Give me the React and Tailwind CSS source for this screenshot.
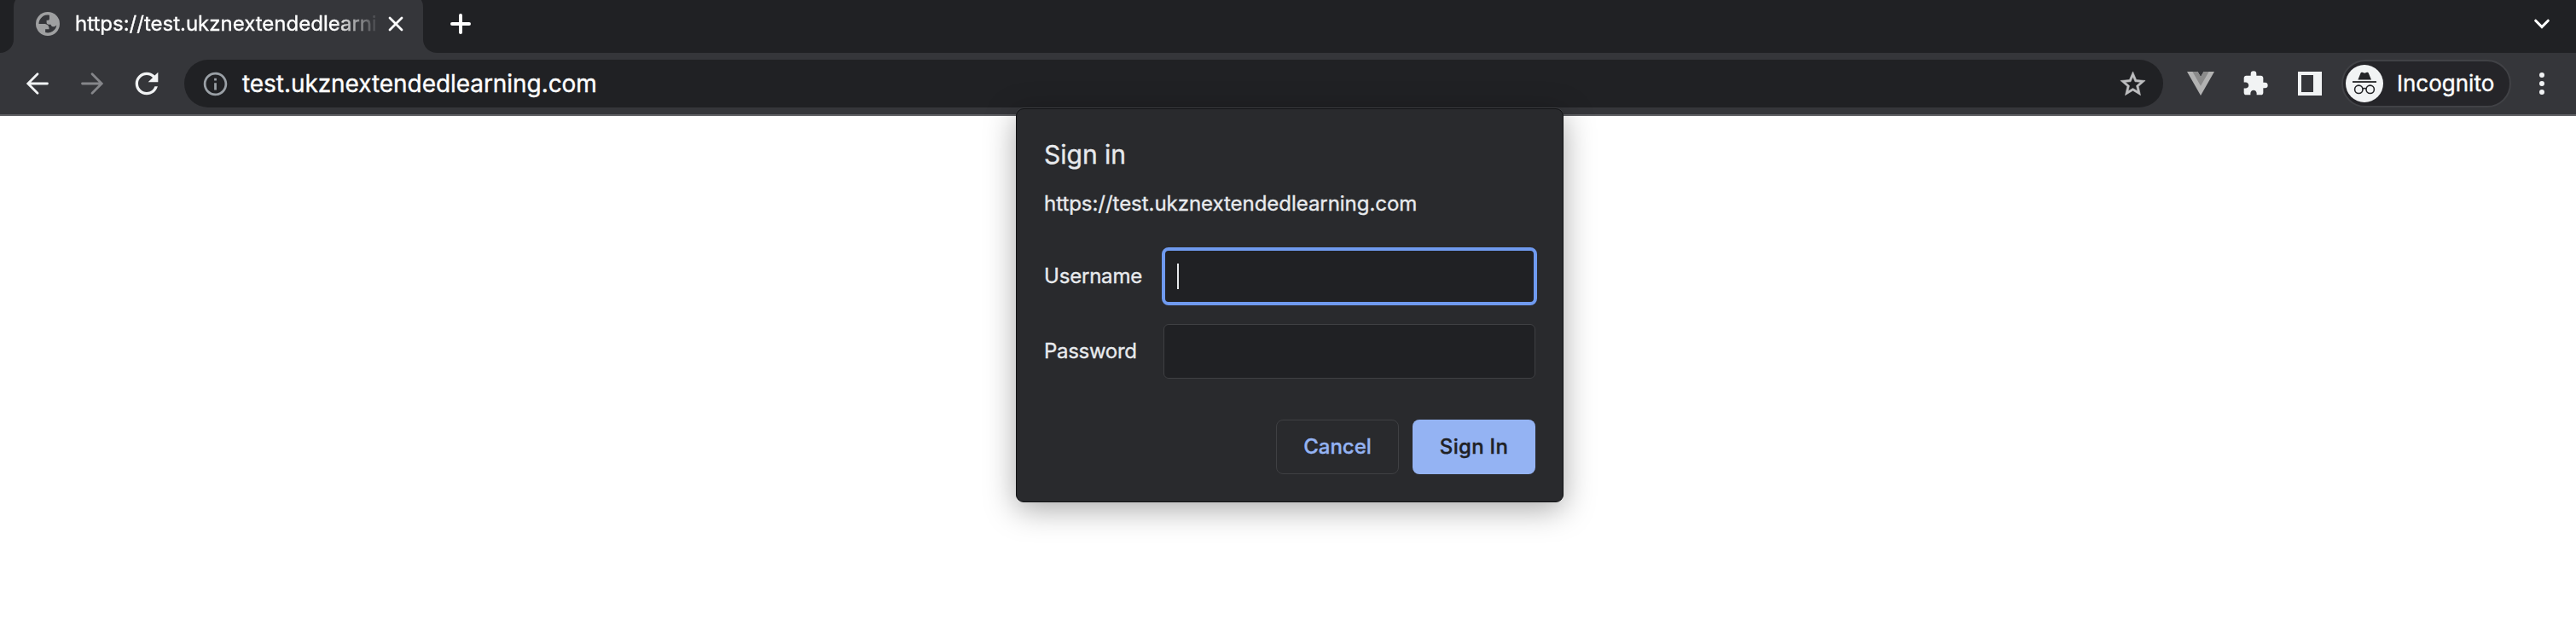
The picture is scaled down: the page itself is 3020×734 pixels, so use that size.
import React from 'react';
import { MdExtension, MdInfoOutline, MdRefresh } from 'react-icons/md';

const SITE = 'test.ukznextendedlearning.com';

const GlobeIcon = () => (
  <svg viewBox="0 0 16 16" className="h-7 w-7 shrink-0">
    <circle cx="8" cy="8" r="8" fill="#9fa0a1" />
    <path
      fill="#35363a"
      d="M2 8H5.4C7.8 8 9 9.2 8.9 11.6H6.36V13.77A6 6 0 0 0 13.9 8.9C13.2 9.6 12.6 9.9 12 9.9C11 9.9 10.3 9.4 10 8.4H8.6C7.8 8.4 7.2 7.8 7.2 7V5.6H8.2C8.8 5.6 9.1 5.2 9.1 4.6V2.1A6 6 0 0 0 2 8Z"
    />
  </svg>
);

const ArrowIcon = ({ className }) => (
  <svg viewBox="0 0 28 28" fill="none" stroke="currentColor" strokeWidth="2.8" strokeLinecap="round" className={className}>
    <path d="M25.5 14H3.5M14 2.8L2.8 14L14 25.2" />
  </svg>
);

const StarIcon = () => (
  <svg viewBox="0 0 24 24" className="mr-[18px] h-[35px] w-[35px] shrink-0" fill="#bdbec0" stroke="#bdbec0" strokeWidth="0.4">
    <path d="M22 9.24l-7.19-.62L12 2 9.19 8.63 2 9.24l5.46 4.73L5.82 21 12 17.27 18.18 21l-1.63-7.03L22 9.24zM12 15.4l-3.76 2.27 1-4.28-3.32-2.88 4.38-.38L12 6.1l1.71 4.04 4.38.38-3.32 2.88 1 4.28L12 15.4z" />
  </svg>
);

const VueIcon = () => (
  <svg viewBox="0 0 32 28" className="h-7 w-8 shrink-0">
    <path d="M0 0H12.5L16 6L19.5 0H32L16 28Z" fill="#b2b2b2" />
    <path d="M6.4 0H12.5L16 6L19.5 0H25.6L16 16.8Z" fill="#8b8b8b" />
  </svg>
);

const IncognitoIcon = () => (
  <svg viewBox="0 0 44 44" className="h-11 w-11 shrink-0">
    <circle cx="22" cy="22" r="22" fill="#f1f3f4" />
    <path d="M14.4 17.5L17.6 9.6C17.9 8.9 18.6 8.6 19.3 8.8L22.2 9.7L25 8.8C25.7 8.6 26.4 8.9 26.7 9.6L30 17.5Z" fill="#242528" />
    <path d="M8 20H36" stroke="#242528" strokeWidth="1.8" />
    <g fill="none" stroke="#242528" strokeWidth="1.6">
      <circle cx="15.3" cy="28.8" r="4.7" />
      <circle cx="28.7" cy="28.8" r="4.7" />
      <path d="M20 28.4C21 27.4 23 27.4 24 28.4" />
    </g>
  </svg>
);

function TabStrip() {
  return (
    <div className="flex h-[62px] items-start overflow-hidden bg-[#202124]">
      {/* the tab's feet are quarter circles cut out of the strip */}
      <div className="h-[62px] w-4 bg-[#35363a]">
        <div className="h-full rounded-br-2xl bg-[#202124]" />
      </div>
      <div className="-mt-2 flex h-[70px] w-[480px] items-center rounded-t-2xl bg-[#35363a] pt-2 pl-[26px]">
        <div className="-mt-[6px] flex items-center">
          <GlobeIcon />
          <div className="ml-[18px] w-[352px] shrink-0 overflow-hidden whitespace-nowrap text-2xl leading-8 text-white [mask-image:linear-gradient(to_right,black_304px,transparent_358px)]">
            {`https://${SITE}`}
          </div>
          <svg viewBox="0 0 18 18" className="ml-[15px] h-[18px] w-[18px] shrink-0" stroke="#fff" strokeWidth="2.8" strokeLinecap="round">
            <path d="M2 2L16 16M16 2L2 16" />
          </svg>
        </div>
      </div>
      <div className="h-[62px] flex-1 bg-[#35363a]">
        <div className="flex h-full items-center justify-between rounded-bl-2xl bg-[#202124] pr-[31px] pb-[6px] pl-8">
          <svg viewBox="0 0 24 24" className="h-6 w-6" stroke="#fff" strokeWidth="4" strokeLinecap="round">
            <path d="M12 2V22M2 12H22" />
          </svg>
          <svg viewBox="0 0 18 12" className="h-3 w-[18px]" fill="none" stroke="#fff" strokeWidth="3" strokeLinecap="round">
            <path d="M1.7 2.2L9 9.6L16.3 2.2" />
          </svg>
        </div>
      </div>
    </div>
  );
}

function Toolbar() {
  return (
    <div className="flex h-[74px] items-center border-b-2 border-[#5f6064] bg-[#35363a] pl-[30px] text-[#f1f3f4]">
      <ArrowIcon className="h-7 w-7 shrink-0" />
      <ArrowIcon className="ml-9 h-7 w-7 shrink-0 rotate-180 text-[#85868a]" />
      <MdRefresh size={40} className="ml-[30px] shrink-0" />

      <div className="ml-6 flex h-14 w-[2320px] shrink-0 items-center rounded-full bg-[#202124] pl-5">
        <MdInfoOutline size={33} className="shrink-0 text-[#9aa0a6]" />
        <div className="ml-[15px] flex-1 text-[28px] leading-9 tracking-[-0.06px] text-white">{SITE}</div>
        <StarIcon />
      </div>

      <div className="ml-7 flex items-center">
        <VueIcon />
        <MdExtension size={32} className="ml-8 shrink-0" />
        <div className="ml-[34px] h-7 w-7 border-4 border-r-[10px] border-[#f1f3f4]" />
      </div>

      <div className="ml-[23px] flex h-14 w-[199px] shrink-0 items-center rounded-full border-2 border-[#414246] bg-[#252529] pl-[3px]">
        <IncognitoIcon />
        <span className="ml-4 text-[26px] leading-8 text-white">Incognito</span>
      </div>

      <div className="ml-[33px] flex flex-col gap-1">
        <div className="h-1.5 w-1.5 rounded-full bg-[#f1f3f4]" />
        <div className="h-1.5 w-1.5 rounded-full bg-[#f1f3f4]" />
        <div className="h-1.5 w-1.5 rounded-full bg-[#f1f3f4]" />
      </div>
    </div>
  );
}

function SignInDialog() {
  return (
    <div className="absolute top-[127px] left-[1191px] flex h-[462px] w-[642px] flex-col rounded-[9px] border border-[#111214] bg-[#292a2d] px-8 pt-[35px] text-2xl leading-8 text-[#e8eaed] shadow-[0_-1px_0_#3c3d40,0_8px_36px_rgba(0,0,0,0.34)]">
      <h1 className="text-3xl leading-9">Sign in</h1>
      <p className="mt-6 tracking-[-0.04px]">{`https://${SITE}`}</p>

      <div className="mt-[35px] flex items-center justify-between">
        <span className="tracking-[-0.2px]">Username</span>
        <div className="-mr-[2px] flex h-[68px] w-[440px] items-center rounded-lg border-4 border-[#6f9aef] bg-[#202124] pl-[14px]">
          <div className="-mt-px h-[30px] w-0.5 bg-[#e8eaed]" />
        </div>
      </div>
      <div className="mt-[22px] flex items-center justify-between">
        <span className="tracking-[-0.3px]">Password</span>
        <div className="h-16 w-[436px] rounded-md border border-[#3f4043] bg-[#202124]" />
      </div>

      <div className="mt-12 flex justify-end gap-4 font-medium">
        <button className="h-16 w-36 rounded-lg border border-[#3f4043] text-[#94b3f3]">Cancel</button>
        <button className="h-16 w-36 rounded-lg bg-[#94b3f3] tracking-[0.3px] text-[#202124]">Sign In</button>
      </div>
    </div>
  );
}

export default function App() {
  return (
    <div className="relative h-[734px] w-[3020px] overflow-hidden bg-white font-['Inter',sans-serif] [-webkit-text-stroke-width:0.35px]">
      <TabStrip />
      <Toolbar />
      <SignInDialog />
    </div>
  );
}
